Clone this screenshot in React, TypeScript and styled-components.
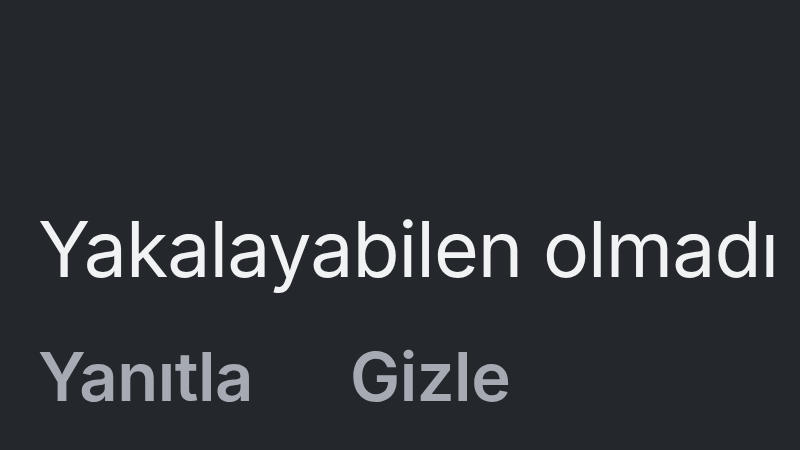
import styled, { createGlobalStyle } from "styled-components";

const GlobalStyle = createGlobalStyle`
  html, body {
    margin: 0;
    padding: 0;
    background: #24272c;
  }
`;

const Screen = styled.div`
  width: 800px;
  height: 450px;
  box-sizing: border-box;
  padding: 204px 0 0 38px;
  background: #24272c;
  font-family: Inter, "Noto Sans", sans-serif;
  overflow: hidden;
`;

const CommentText = styled.p`
  margin: 0;
  font-size: 77px;
  line-height: 90px;
  font-weight: 400;
  color: #f1f2f3;
  letter-spacing: -1px;
  white-space: nowrap;
`;

const Actions = styled.div`
  display: flex;
  gap: 97px;
  margin-top: 43px;
`;

const ActionButton = styled.span`
  font-size: 67px;
  line-height: 80px;
  font-weight: 600;
  color: #a6abb3;
  letter-spacing: -0.5px;
`;

const App = () => {
  return (
    <>
      <GlobalStyle />
      <Screen>
        <CommentText>Yakalayabilen olmadı</CommentText>
        <Actions>
          <ActionButton>Yanıtla</ActionButton>
          <ActionButton>Gizle</ActionButton>
        </Actions>
      </Screen>
    </>
  );
};

export default App;
